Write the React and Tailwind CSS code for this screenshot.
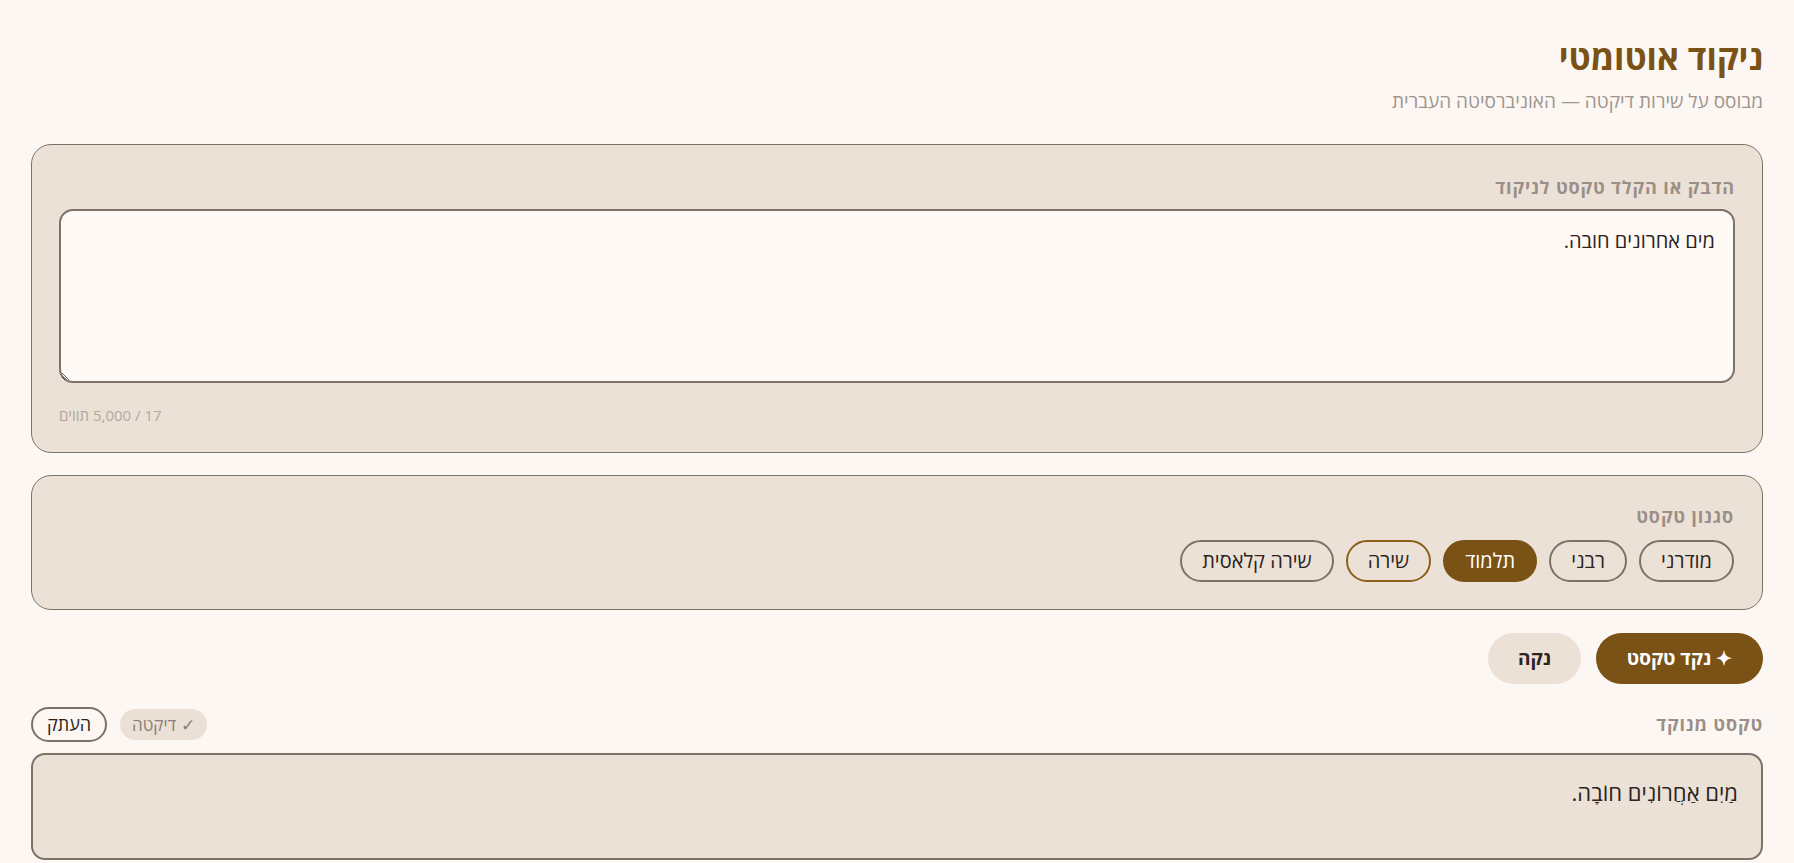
import React from 'react';

const styles = ['מודרני', 'רבני', 'תלמוד', 'שירה', 'שירה קלאסית'];

const App = () => {
    return (
        <div dir="rtl" className="min-h-screen bg-[#fdf7f3] px-[31px] pt-[34px] pb-4 font-['Open_Sans',sans-serif] text-[#2b2420]">
            {/* Header */}
            <header className="mb-[30px]">
                <h1 className="text-[34px] leading-[46px] font-bold text-[#7a5215]">ניקוד אוטומטי</h1>
                <p className="text-[19px] leading-[26px] text-[#9d9690] mt-[8px]">מבוסס על שירות דיקטה — האוניברסיטה העברית</p>
            </header>

            {/* Input Card */}
            <section className="bg-[#ece1d6] border border-[#7d7268] rounded-[20px] px-[27px] pt-[30px] pb-[26px]">
                <label className="block text-[18px] leading-[24px] font-bold tracking-wider text-[#9a8f88] mb-[10px]">הדבק או הקלד טקסט לניקוד</label>
                <textarea
                    defaultValue="מים אחרונים חובה."
                    className="block w-full h-[174px] bg-[#fef9f5] border-2 border-[#7d7268] rounded-[14px] px-[18px] py-[16px] text-[20px] leading-[28px] text-[#2b2420] outline-none font-['Open_Sans',sans-serif]"
                />
                <div className="flex justify-end mt-[21px]">
                    <span className="text-[15px] leading-[22px] text-[#b3a89f]">17 / 5,000 תווים</span>
                </div>
            </section>

            {/* Style Card */}
            <section className="mt-[22px] bg-[#ece1d6] border border-[#7d7268] rounded-[20px] px-[28px] pt-[28px] pb-[27px]">
                <h3 className="text-[18px] leading-[24px] font-bold tracking-wider text-[#9a8f88] mb-[12px]">סגנון טקסט</h3>
                <div className="flex gap-[12px]">
                    {styles.map((s) => (
                        <button
                            key={s}
                            className={
                                s === 'תלמוד'
                                    ? 'h-[42px] px-[20px] rounded-full border-2 border-[#7a5215] bg-[#7a5215] text-white text-[20px]'
                                    : s === 'שירה'
                                    ? 'h-[42px] px-[20px] rounded-full border-2 border-[#8a5e1c] text-[#2b2420] text-[20px]'
                                    : 'h-[42px] px-[20px] rounded-full border-2 border-[#7d7268] text-[#2b2420] text-[20px]'
                            }
                        >
                            {s}
                        </button>
                    ))}
                </div>
            </section>

            {/* Actions */}
            <div className="flex gap-[15px] mt-[23px]">
                <button className="h-[51px] px-[31px] rounded-full bg-[#7a5215] text-white text-[19px] font-bold">✦ נקד טקסט</button>
                <button className="h-[51px] px-[30px] rounded-full bg-[#ece1d6] text-[#2b2420] text-[19px] font-bold">נקה</button>
            </div>

            {/* Output */}
            <div className="flex items-center justify-between mt-[23px] mb-[11px]">
                <h3 className="text-[18px] font-bold tracking-wider text-[#9a8f88]">טקסט מנוקד</h3>
                <div className="flex items-center gap-[13px]">
                    <span className="h-[31px] px-[12px] flex items-center rounded-full bg-[#ebe0d5] text-[17px] text-[#8a7f77]">✓ דיקטה</span>
                    <button className="h-[35px] px-[14px] rounded-full border-2 border-[#7d7268] text-[18px] text-[#2b2420]">העתק</button>
                </div>
            </div>
            <div className="bg-[#ece1d6] border-2 border-[#7d7268] rounded-[14px] px-[23px] py-[21px] h-[107px]">
                <p className="text-[22px] leading-[32px] text-[#2b2420]">מַיִם אַחֲרוֹנִים חוֹבָה.</p>
            </div>
        </div>
    );
};

export default App;
